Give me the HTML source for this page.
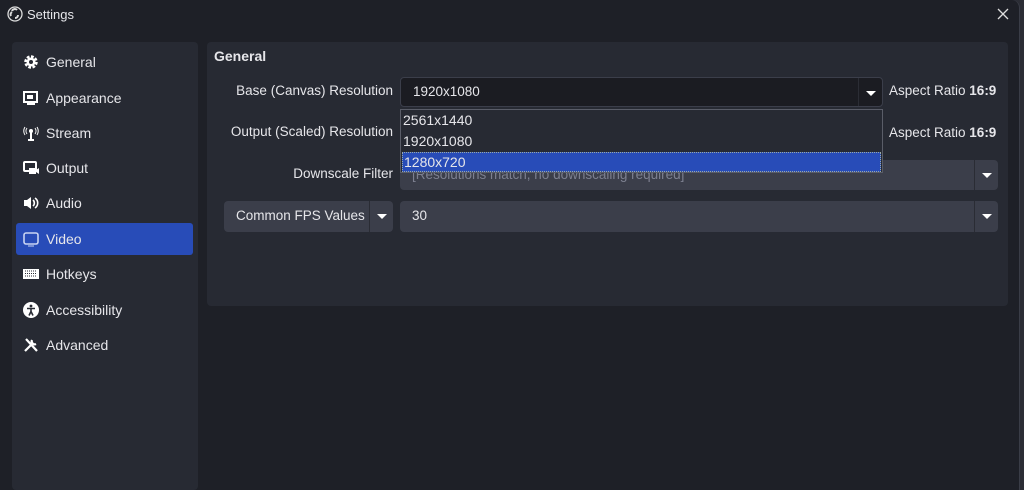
<!DOCTYPE html>
<html><head><style>
*{margin:0;padding:0;box-sizing:border-box}
body{width:1024px;height:490px;background:#2b2d35;font-family:"Liberation Sans",sans-serif;color:#e6e6ea;overflow:hidden;position:relative}
.win{position:absolute;left:0;top:0;width:1020px;height:490px;background:#1e2027;border-radius:0 8px 0 0;border-right:1px solid #3a3d47}
.abs{position:absolute}
.title{left:27px;top:7px;font-size:13px;color:#e6e6ea}
.side{left:12px;top:42px;width:186px;height:448px;background:#272a33;border-radius:4px}
.item{position:absolute;left:4px;width:177px;height:32px;border-radius:3px;font-size:14px;line-height:32px;padding-left:30px}
.item svg{position:absolute;left:7px;top:8px}
.sel{background:#284cb8}
.panel{left:207px;top:42px;width:801px;height:264px;background:#272a33;border-radius:4px}
.lbl{font-size:13.5px;text-align:right;width:200px}
.box{border-radius:4px;font-size:13.5px;line-height:30px;padding-left:12px}
.arrow{position:absolute;right:0;top:0;width:24px;height:100%;border-left:1px solid #2a2c34}
.arrow:after{content:"";position:absolute;left:7px;top:13px;border-left:5px solid transparent;border-right:5px solid transparent;border-top:5px solid #fff}
</style></head><body>
<div class="win">
<svg class="abs" style="left:7px;top:6px" width="16" height="16" viewBox="0 0 16 16"><circle cx="8" cy="8" r="7" fill="none" stroke="#ddd" stroke-width="1.3"/><path d="M5 5a3 3 0 0 1 5-1M11 9a3 3 0 0 1-3 3M4 10a3 3 0 0 1 1-4" stroke="#ddd" stroke-width="2" fill="none"/></svg>
<div class="abs title">Settings</div>
<svg class="abs" style="left:997px;top:8px" width="12" height="12"><path d="M1 1L11 11M11 1L1 11" stroke="#ddd" stroke-width="1.3"/></svg>
<div class="abs side">
<div class="item" style="top:4px"><svg width="16" height="16" viewBox="0 0 16 16"><circle cx="8" cy="8" r="5" fill="none" stroke="#fff" stroke-width="3.5" stroke-dasharray="2.5 1.4"/><circle cx="8" cy="8" r="4.5" fill="#fff"/><circle cx="8" cy="8" r="2" fill="#272a33"/></svg>General</div>
<div class="item" style="top:40px"><svg width="16" height="16" viewBox="0 0 16 16"><rect x="1" y="2" width="13" height="10" fill="none" stroke="#fff" stroke-width="2"/><rect x="4" y="5" width="6" height="4" fill="#fff"/><path d="M4 14h8" stroke="#fff" stroke-width="2"/></svg>Appearance</div>
<div class="item" style="top:75px"><svg width="16" height="16" viewBox="0 0 16 16"><path d="M8 7v8M5 15h6" stroke="#fff" stroke-width="2"/><circle cx="8" cy="6" r="2" fill="#fff"/><path d="M4 3a5 5 0 0 0 0 6M12 3a5 5 0 0 1 0 6M2 2a7 7 0 0 0 0 8M14 2a7 7 0 0 1 0 8" stroke="#fff" fill="none"/></svg>Stream</div>
<div class="item" style="top:110px"><svg width="16" height="16" viewBox="0 0 16 16"><rect x="1" y="2" width="12" height="9" rx="1" fill="none" stroke="#fff" stroke-width="2"/><rect x="6" y="8" width="7" height="6" fill="#fff"/><path d="M13 10l3-2v6l-3-2z" fill="#fff"/></svg>Output</div>
<div class="item" style="top:145px"><svg width="16" height="16" viewBox="0 0 16 16"><path d="M1 5h3l4-3v12l-4-3H1z" fill="#fff"/><path d="M10 5a4 4 0 0 1 0 6M12 3a6 6 0 0 1 0 10" stroke="#fff" stroke-width="1.6" fill="none"/></svg>Audio</div>
<div class="item sel" style="top:181px"><svg width="16" height="16" viewBox="0 0 16 16"><rect x="1" y="2" width="14" height="11" rx="2" fill="none" stroke="#c9d3f2" stroke-width="1.6"/><path d="M5 15h6" stroke="#c9d3f2"/></svg>Video</div>
<div class="item" style="top:216px"><svg width="16" height="16" viewBox="0 0 16 16"><rect x="0" y="3" width="16" height="10" fill="#fff"/><path d="M2 5h12M2 7.5h12M2 10h12" stroke="#272a33" stroke-dasharray="1 1"/></svg>Hotkeys</div>
<div class="item" style="top:252px"><svg width="16" height="16" viewBox="0 0 16 16"><circle cx="8" cy="8" r="8" fill="#fff"/><circle cx="8" cy="4" r="1.4" fill="#272a33"/><path d="M4 6.5h8M8 6.5v3M8 9.5l-2 4M8 9.5l2 4" stroke="#272a33" stroke-width="1.6"/></svg>Accessibility</div>
<div class="item" style="top:287px"><svg width="16" height="16" viewBox="0 0 16 16"><path d="M2 14L10 6M9 3a3 3 0 0 0 4 4M3 2l11 12" stroke="#fff" stroke-width="2.2" fill="none"/></svg>Advanced</div>
</div>
<div class="abs panel">
<div class="abs" style="left:7px;top:6px;font-size:14px;font-weight:bold">General</div>
</div>
<div class="abs lbl" style="left:193px;top:83px">Base (Canvas) Resolution</div>
<div class="abs lbl" style="left:193px;top:124px">Output (Scaled) Resolution</div>
<div class="abs lbl" style="left:193px;top:166px">Downscale Filter</div>
<div class="abs box" style="left:400px;top:77px;width:483px;height:30px;background:#1b1c22;border:1px solid #3b3e4a;line-height:28px">1920x1080<div class="arrow" style="border-color:#2b2d35"></div></div>
<div class="abs" style="left:889px;top:83px;font-size:13.5px">Aspect Ratio <b>16:9</b></div>
<div class="abs" style="left:889px;top:125px;font-size:13.5px">Aspect Ratio <b>16:9</b></div>
<div class="abs box" style="left:400px;top:160px;width:598px;height:30px;background:#3b3e4a;color:#7d8090">[Resolutions match, no downscaling required]<div class="arrow"></div></div>
<div class="abs box" style="left:224px;top:201px;width:169px;height:31px;background:#3b3e4a">Common FPS Values<div class="arrow"></div></div>
<div class="abs box" style="left:400px;top:201px;width:598px;height:31px;background:#3b3e4a">30<div class="arrow"></div></div>
<div class="abs" style="left:400px;top:109px;width:483px;height:64px;background:#272a33;border:1px solid #5a5d68;font-size:14px">
<div style="padding-left:2px;height:21px;line-height:21px">2561x1440</div>
<div style="padding-left:2px;height:21px;line-height:21px">1920x1080</div>
<div style="margin:0 1px;padding-left:1px;height:20px;line-height:18px;background:#284cb8;border:1px dotted #9aa">1280x720</div>
</div>
</div>
</body></html>
